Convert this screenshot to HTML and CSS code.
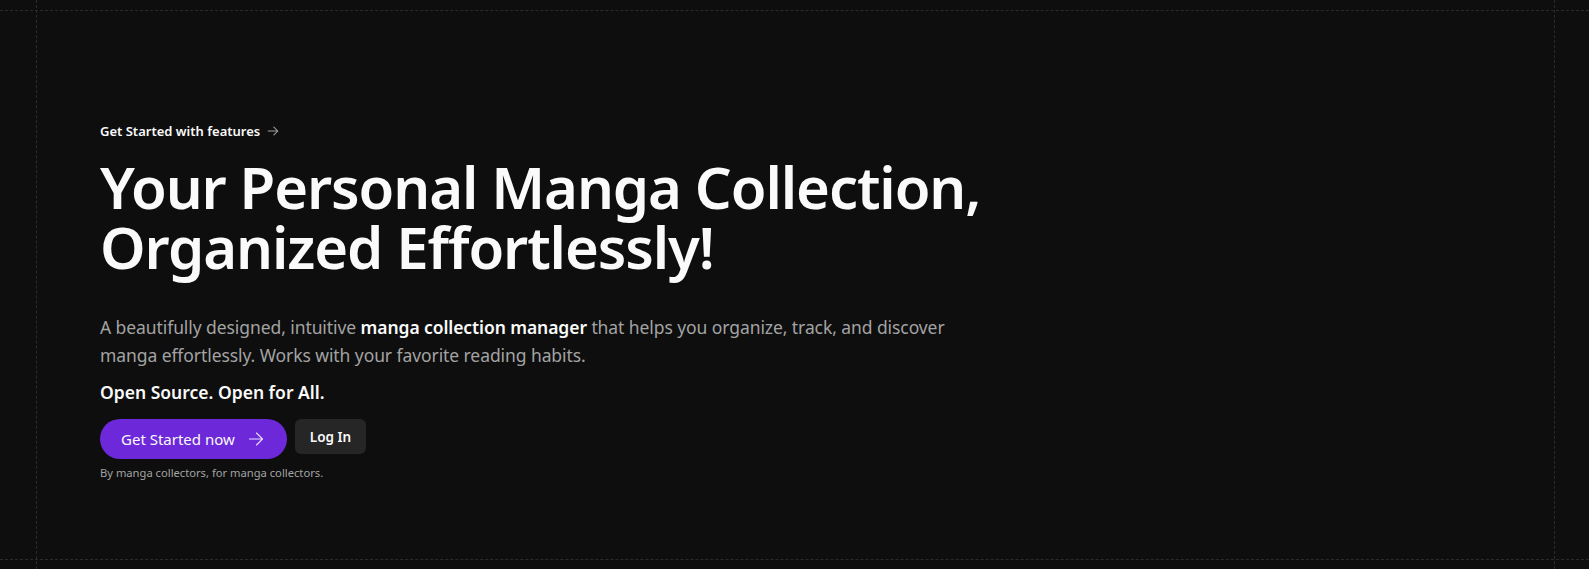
FILE: index.html
```html
<!DOCTYPE html>
<html lang="en">
<head>
<meta charset="utf-8">
<title>Manga Collection</title>
<link rel="stylesheet" href="styles.css">
</head>
<body>
<div class="frame">
  <div class="grid-lines" aria-hidden="true">
    <span class="hline hline-top"></span>
    <span class="hline hline-bottom"></span>
    <span class="vline vline-left"></span>
    <span class="vline vline-right"></span>
  </div>
  <main class="hero">
    <a class="eyebrow" href="#">Get Started with features
      <svg class="eyebrow-arrow" viewBox="0 0 16 16" width="14" height="14" fill="none" stroke="currentColor" stroke-width="1.2" stroke-linecap="round" stroke-linejoin="round"><path d="M2.5 8h11M9 3.5 13.5 8 9 12.5"/></svg>
    </a>
    <h1 class="title">Your Personal Manga Collection,<br>Organized Effortlessly!</h1>
    <p class="lead">A beautifully designed, intuitive <strong>manga collection manager</strong> that helps you organize, track, and discover<br>manga effortlessly. Works with your favorite reading habits.</p>
    <p class="tag">Open Source. Open for All.</p>
    <div class="actions">
      <a class="btn-primary" href="#">Get Started now
        <svg class="btn-arrow" viewBox="0 0 16 16" width="16" height="16" fill="none" stroke="currentColor" stroke-width="1.1" stroke-linecap="round" stroke-linejoin="round"><path d="M1.5 8h13M8.5 2 14.5 8 8.5 14"/></svg>
      </a>
      <a class="btn-secondary" href="#">Log In</a>
    </div>
    <p class="note">By manga collectors, for manga collectors.</p>
  </main>
</div>
</body>
</html>
```
FILE: styles.css
```css
* { box-sizing: border-box; }
html, body { margin: 0; padding: 0; }
body {
  background: #0e0e0e;
  color: #fafafa;
  font-family: "Noto Sans", "Open Sans", "Liberation Sans", sans-serif;
  height: 569px;
  overflow: hidden;
}
.frame {
  position: relative;
  height: 569px;
}
.grid-lines { position: absolute; inset: 0; pointer-events: none; }
.hline { position: absolute; left: 0; right: 0; height: 0; border-top: 1px dashed #2b2b2b; }
.hline-top { top: 10px; }
.hline-bottom { top: 559px; }
.vline { position: absolute; top: 0; bottom: 0; width: 0; border-left: 1px dashed #2b2b2b; }
.vline-left { left: 36px; }
.vline-right { left: 1554px; }

.hero {
  display: flex;
  flex-direction: column;
  align-items: flex-start;
  padding: 121px 0 0 100px;
}
.eyebrow {
  display: inline-flex;
  align-items: center;
  gap: 6px;
  color: #fafafa;
  text-decoration: none;
  font-size: 13px;
  font-weight: 600;
  line-height: 20px;
}
.eyebrow-arrow { color: #a3a3a3; }
.title {
  margin: 16px 0 0;
  font-size: 58px;
  line-height: 60px;
  font-weight: 600;
  letter-spacing: -1.1px;
  color: #fafafa;
}
.lead {
  margin: 36px 0 0;
  font-size: 17.5px;
  line-height: 28px;
  letter-spacing: -0.08px;
  color: #a3a3a3;
}
.lead strong { color: #fafafa; font-weight: 600; }
.tag {
  margin: 9px 0 0;
  font-size: 17.5px;
  line-height: 28px;
  font-weight: 600;
  color: #fafafa;
}
.actions {
  display: flex;
  align-items: flex-start;
  gap: 8px;
  margin-top: 13px;
}
.btn-primary {
  display: inline-flex;
  align-items: center;
  gap: 13px;
  height: 40px;
  padding: 0 23px 0 21px;
  border-radius: 999px;
  background: #6d28d9;
  color: #fafafa;
  font-size: 15px;
  font-weight: 400;
  text-decoration: none;
}
.btn-arrow { color: #e9ddff; }
.btn-secondary {
  display: inline-flex;
  align-items: center;
  justify-content: center;
  height: 35px;
  padding: 0 15px;
  border-radius: 6px;
  background: #262626;
  color: #fafafa;
  font-size: 13.5px;
  font-weight: 600;
  text-decoration: none;
}
.note {
  margin: 6px 0 0;
  font-size: 11.2px;
  line-height: 16px;
  color: #a3a3a3;
}
```
